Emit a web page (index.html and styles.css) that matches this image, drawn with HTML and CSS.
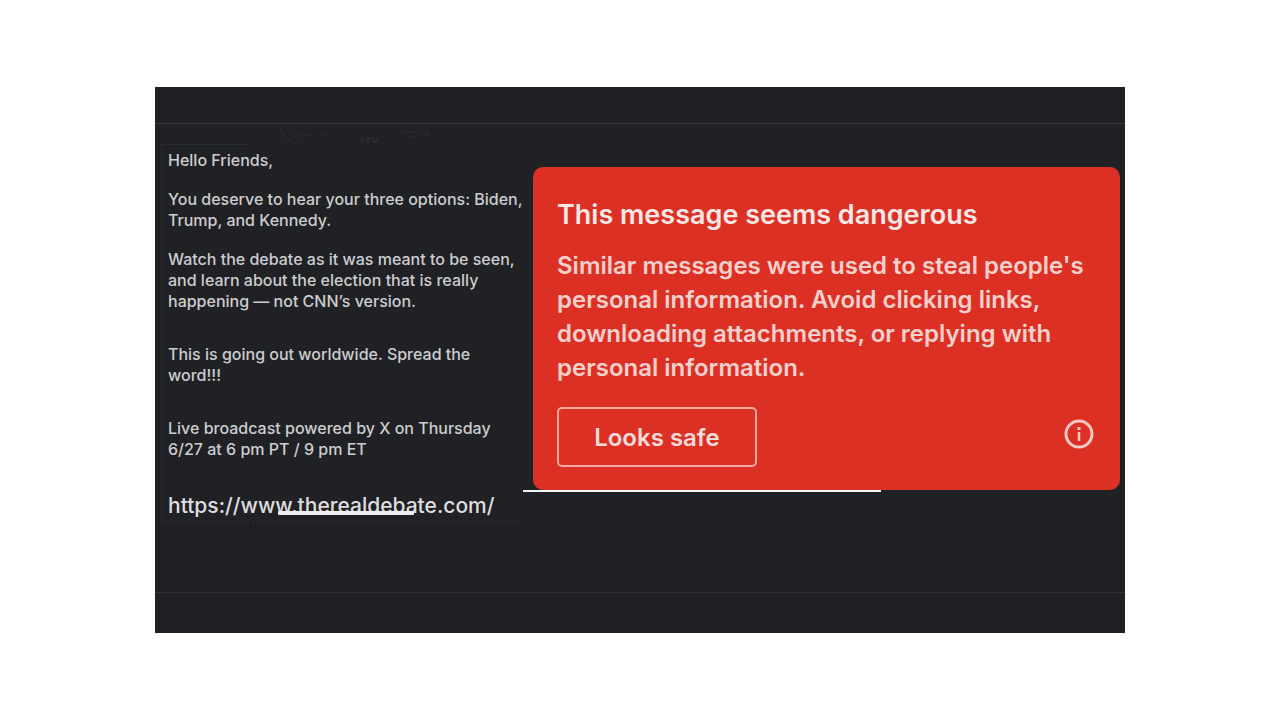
FILE: index.html
```
<!DOCTYPE html>
<html lang="en">
<head>
    <meta charset="UTF-8">
    <meta name="viewport" content="width=device-width, initial-scale=1.0">
    <title>This message seems dangerous</title>
    <link rel="stylesheet" href="styles.css">
</head>
<body>
    <main class="screen">
        <div class="top-bar"></div>

        <div class="content">
            <!-- Faded marks under the top bar -->
            <svg class="marks" width="170" height="24" viewBox="0 0 170 24" aria-hidden="true">
                <path d="M2 2c2 8 8 14 18 15M12 3c4 5 14 9 22 5M38 11l8-3M124 6h13M127 11h9M148 3v6M142 9h10"/>
                <path class="bright" d="M83 11v6M89 11v6M92 11l4 6 3-6"/>
            </svg>

            <!-- Email text -->
            <article class="message">
                <p>Hello Friends,</p>
                <p>You deserve to hear your three options: Biden,<br>Trump, and Kennedy.</p>
                <p>Watch the debate as it was meant to be seen,<br>and learn about the election that is really<br>happening — not CNN’s version.</p>
                <p class="spaced">This is going out worldwide. Spread the<br>word!!!</p>
                <p class="spaced">Live broadcast powered by X on Thursday<br>6/27 at 6 pm PT / 9 pm ET</p>
                <a class="link" href="https://www.therealdebate.com/">https://www.therealdebate.com/</a>
            </article>

            <!-- Warning card -->
            <section class="warning">
                <h1>This message seems dangerous</h1>
                <p>Similar messages were used to steal people's<br>personal information. Avoid clicking links,<br>downloading attachments, or replying with<br>personal information.</p>
                <div class="actions">
                    <button class="safe-button" type="button">Looks safe</button>
                    <button class="info-button" type="button" aria-label="More information">
                        <svg width="30" height="30" viewBox="0 0 30 30" aria-hidden="true">
                            <circle cx="15" cy="15" r="13" fill="none" stroke="currentColor" stroke-width="3"/>
                            <path d="M15 13v9" stroke="currentColor" stroke-width="2.5"/>
                            <path d="M15 8v3" stroke="currentColor" stroke-width="3"/>
                        </svg>
                    </button>
                </div>
            </section>
        </div>

        <div class="bottom-bar"></div>
    </main>
</body>
</html>
```
FILE: styles.css
```
* {
    box-sizing: border-box;
}

body {
    font-family: Inter, "Liberation Sans", sans-serif;
    margin: 0;
    min-height: 100vh;
    display: flex;
    align-items: center;
    justify-content: center;
    background-color: #ffffff;
}

.screen {
    width: 90%;
    max-width: 970px;
    background-color: #202125;
}

.top-bar {
    height: 37px;
    border-bottom: 1px solid #36373c;
}

.bottom-bar {
    height: 41px;
    border-top: 1px solid #303136;
}

.content {
    position: relative;
    display: grid;
    grid-template-columns: minmax(0, 362fr) minmax(0, 587fr);
    align-items: start;
    gap: 10px;
    padding: 20px 5px 70px 6px;
}

.marks {
    position: absolute;
    top: 2px;
    left: 124px;
    fill: none;
    stroke: #25272b;
    stroke-width: 2;
}

.marks .bright {
    stroke: #34363a;
    stroke-width: 1;
}

.message {
    position: relative;
    padding: 6px 0 2px 6px;
    border-left: 1px solid #27292d;
    border-bottom: 1px solid #27292d;
    color: #cdcdcf;
    font-size: 16px;
    font-weight: 500;
    line-height: 21px;
}

/* short edge over the greeting */
.message::before {
    content: "";
    position: absolute;
    top: 0;
    left: 0;
    width: 88px;
    height: 1px;
    background-color: #292c30;
}

/* seam below the message */
.message::after {
    content: "";
    position: absolute;
    top: 100%;
    left: 88px;
    width: 1px;
    height: 70px;
    background-color: #1a1b1e;
}

.message p {
    margin: 0 0 18px;
    white-space: nowrap;
}

.message .spaced {
    margin: 32px 0;
}

.link {
    position: relative;
    display: inline-block;
    color: #dededf;
    font-size: 21px;
    line-height: 27px;
    text-decoration: none;
}

.link::after {
    content: "";
    position: absolute;
    left: 110px;
    bottom: 4px;
    width: 136px;
    height: 4px;
    border-radius: 1px;
    background-color: #eeeeee;
}

.warning {
    position: relative;
    margin-top: 23px;
    padding: 30px 24px 23px;
    border-radius: 10px;
    background-color: #dc3025;
    color: #fbd0cc;
}

/* white rule along the lower edge */
.warning::after {
    content: "";
    position: absolute;
    top: 100%;
    left: -10px;
    width: 358px;
    height: 2px;
    background-color: #f5f5f5;
}

.warning h1 {
    margin: 0 0 16px;
    color: #fde8e6;
    font-size: 27px;
    font-weight: 600;
    line-height: 36px;
}

.warning p {
    margin: 0;
    font-size: 24px;
    font-weight: 600;
    line-height: 34px;
    white-space: nowrap;
}

.actions {
    display: flex;
    align-items: center;
    justify-content: space-between;
    margin-top: 22px;
}

button {
    font-family: inherit;
    cursor: pointer;
}

.safe-button {
    width: 200px;
    height: 60px;
    border: 2px solid #f4a8a1;
    border-radius: 5px;
    background: none;
    color: #fddbd8;
    font-size: 24px;
    font-weight: 600;
}

.info-button {
    display: flex;
    margin: 0 2px 6px 0;
    padding: 0;
    border: none;
    background: none;
    color: #fbc9c4;
}
```
